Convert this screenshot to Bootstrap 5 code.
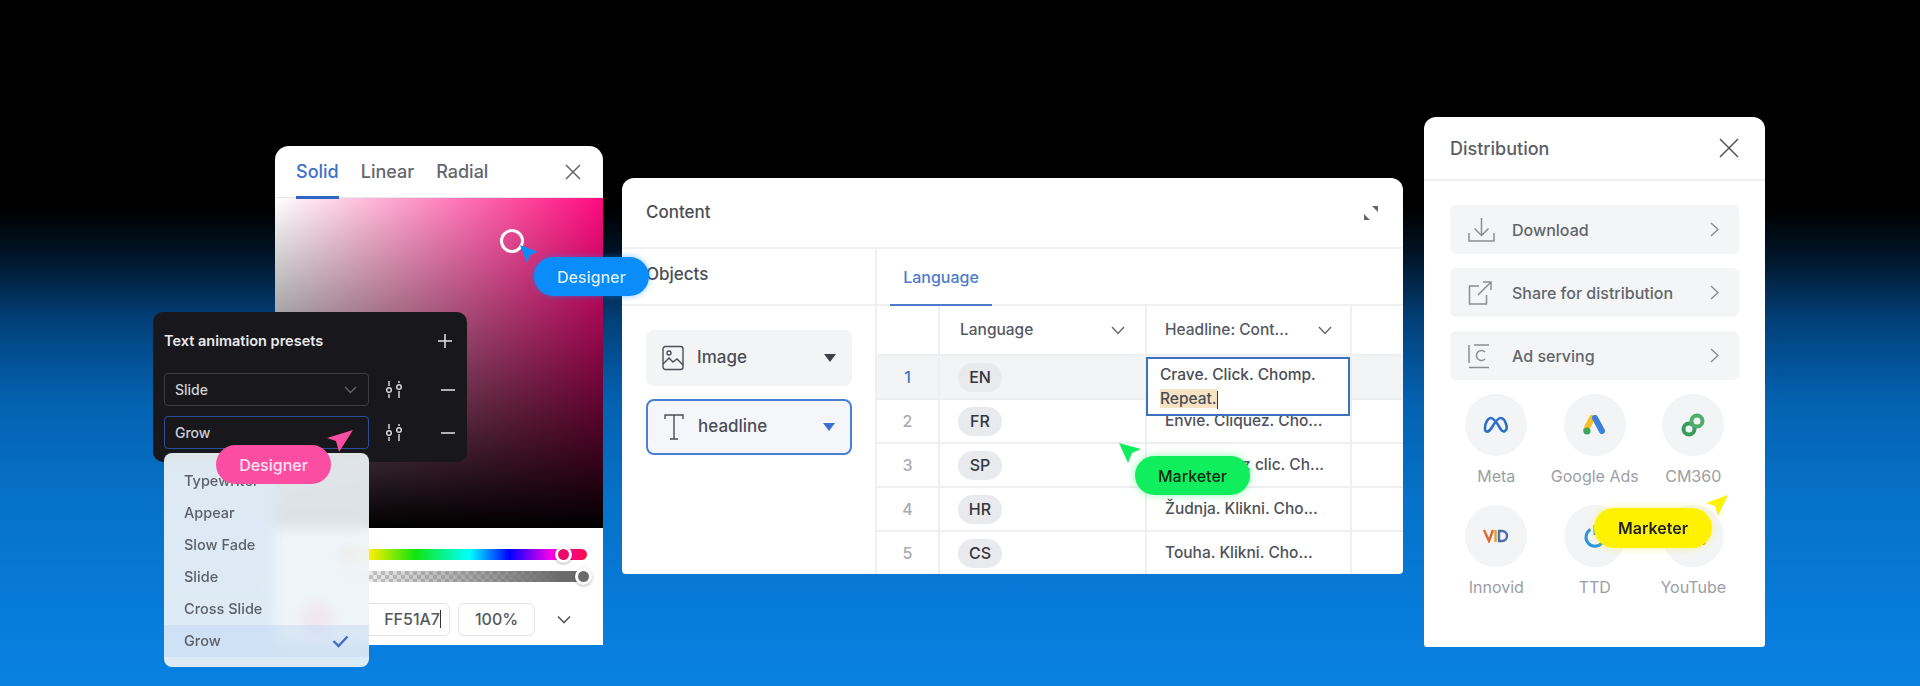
<!DOCTYPE html>
<html lang="en">
<head>
  <meta charset="UTF-8" />
  <title>Collaboration panels</title>
  <link href="https://cdn.jsdelivr.net/npm/bootstrap@5.3.3/dist/css/bootstrap.min.css" rel="stylesheet" />
  <style>
    html, body { margin: 0; height: 100%; overflow: hidden; }
    body { font-family: Inter, "Liberation Sans", sans-serif; color: #4b4e56; background: #000; }
    .stage { position: relative; width: 1920px; height: 686px; overflow: hidden;
      background: linear-gradient(180deg, #000 0, #000 210px, #01172c 260px, #024079 320px, #0461b0 400px, #0672c9 500px, #0881e3 686px); }
    .win { position: absolute; background: #fff; overflow: hidden; }
    .cursor-layer { position: absolute; left: 0; top: 0; width: 1920px; height: 686px; z-index: 9; pointer-events: none; }
    .tag { position: absolute; z-index: 10; display: flex; align-items: center; justify-content: center; border-radius: 20px; font-size: 16px; font-weight: 500; }
    .tag-blue { left: 534px; top: 257px; width: 115px; height: 39px; background: #0a8cfb; color: #dcefff; box-shadow: 0 0 6px rgba(10,140,251,.5); }
    .tag-pink { left: 216px; top: 445px; width: 115px; height: 39px; background: #fb4ea2; color: #ffe3f0; }
    .tag-green { left: 1135px; top: 456px; width: 115px; height: 39px; background: #10ee5e; color: #06240f; box-shadow: 0 0 8px rgba(16,238,94,.45); }
    .tag-yellow { left: 1594px; top: 508px; width: 118px; height: 40px; background: #fff200; color: #222; font-weight: 600; box-shadow: 0 0 8px rgba(255,242,0,.4); }

    /* colour picker */
    .picker { left: 275px; top: 146px; width: 328px; height: 499px; border-radius: 14px 14px 0 0; }
    .picker-head { height: 52px; padding: 0 21px; font-size: 18px; font-weight: 500; color: #63666d; gap: 22px; border-bottom: 1px solid #e8e8ec; }
    .picker-tab { height: 52px; display: flex; align-items: center; position: relative; }
    .picker-tab.on { color: #3e6fc8; }
    .picker-tab.on::after { content: ""; position: absolute; left: 0; right: 0; bottom: -1px; height: 3px; background: #2f66c6; }
    .sat-box { height: 330px; background: linear-gradient(180deg, rgba(0,0,0,0), #000), linear-gradient(90deg, #fff, #ff0a7e); }
    .picker-foot { height: 117px; padding: 21px 16px 0 0; }
    .hue-bar { height: 11px; margin-left: 62px; border-radius: 6px; position: relative;
      background: linear-gradient(90deg, #ff5a3a 0, #ffee00 13%, #11e50c 31%, #0ff 53%, #0000ff 69%, #ff00e6 86%, #ff0a40 100%); }
    .alpha-bar { height: 11px; margin: 11px 0 0 62px; border-radius: 6px; position: relative;
      background: linear-gradient(90deg, rgba(110,110,110,0), #6b6b6b 90%), repeating-conic-gradient(#cfcfcf 0 25%, #fff 0 50%) 0 0 / 8px 8px; }
    .thumb { position: absolute; top: -3px; width: 17px; height: 17px; border-radius: 50%; border: 3px solid #fff; box-shadow: 0 1px 3px rgba(0,0,0,.3); }
    .swatch { width: 34px; height: 34px; border-radius: 50%; background: #ff51a7; margin-left: 25px; }
    .val-box { height: 33px; border: 1px solid #e4e4e8; border-radius: 6px; font-size: 16px; font-weight: 500; color: #55585f; display: flex; align-items: center; }
    .caret-bar { display: inline-block; width: 1px; height: 18px; background: #333; }

    /* dark presets panel */
    .presets { position: absolute; z-index: 5; left: 153px; top: 312px; width: 314px; height: 150px; background: #17171c; border-radius: 10px; padding: 11px; color: #ddd; }
    .presets-head { height: 36px; padding-right: 4px; font-size: 14.5px; font-weight: 600; color: #e9e9ec; margin-bottom: 14px; }
    .preset-row { height: 33px; margin-bottom: 10px; }
    .preset-select { width: 205px; height: 33px; border: 1px solid #3c3d42; border-radius: 4px; padding: 0 11px 0 10px; font-size: 14px; font-weight: 500; color: #cfd0d3; }
    .preset-select.on { border: 1px solid #2a4d9c; }
    .preset-tools { width: 86px; padding-left: 16px; }

    /* dropdown */
    .drop { position: absolute; z-index: 6; left: 164px; top: 453px; width: 205px; height: 214px; border-radius: 8px; padding: 12px 0; background: rgba(238,243,248,.93); backdrop-filter: blur(6px); font-size: 14.5px; font-weight: 500; color: #5c6068; }
    .drop-item { height: 32px; padding: 0 20px; display: flex; align-items: center; justify-content: space-between; }
    .drop-item.on { background: rgba(190,215,245,.45); }

    /* content panel */
    .content-win { left: 622px; top: 178px; width: 781px; height: 396px; border-radius: 12px 12px 4px 4px; font-size: 15.5px; }
    .content-head { height: 71px; padding: 0 24px; border-bottom: 2px solid #eeeff1; font-size: 17px; font-weight: 500; }
    .side { width: 255px; flex: none; border-right: 2px solid #eeeff1; }
    .side-title { height: 57px; padding: 0 24px; border-bottom: 2px solid #eeeff1; font-size: 17px; font-weight: 500; }
    .obj-btn { height: 56px; margin: 0 0 13px 24px; width: 206px; border-radius: 8px; background: #f3f4f6; padding: 0 16px; font-size: 17px; font-weight: 500; gap: 13px; }
    .obj-btn.on { border: 2px solid #4a7fd4; background: #f5f6f9; padding: 0 15px; }
    .tab-strip { height: 57px; border-bottom: 2px solid #eeeff1; padding-left: 13px; }
    .tab-lang { height: 57px; width: 102px; display: flex; align-items: center; justify-content: center; color: #4d7ccb; font-size: 16px; font-weight: 500; border-bottom: 2px solid #4d7ccb; }
    .lang-table { width: 526px; table-layout: fixed; border-collapse: collapse; }
    .lang-table td, .lang-table th { padding: 0; border-bottom: 2px solid #eeeff1; border-right: 2px solid #eeeff1; height: 44px; vertical-align: middle; font-weight: 500; }
    .lang-table th { height: 49px; font-size: 15.5px; padding: 0 20px; color: #565962; }
    .lang-table td:last-child, .lang-table th:last-child { border-right: 0; }
    .lang-table td.num { text-align: center; color: #a9abb0; font-size: 16px; }
    .lang-table td.lang { padding-left: 18px; }
    .lang-table td.txt { padding-left: 18px; color: #4f5259; white-space: nowrap; overflow: visible; font-size: 15.5px; position: relative; }
    .lang-table tr.sel td { background: #f3f4f6; }
    .lang-table tr.sel td.num { color: #3f76c9; }
    .lang-pill { display: inline-flex; align-items: center; justify-content: center; width: 44px; height: 29px; border-radius: 15px; background: #e9eaed; font-size: 16px; color: #33363c; }
    .edit-box { position: absolute; left: -1px; top: 1px; width: 204px; height: 59px; background: #fff; border: 2px solid #3f70bd; padding: 4px 12px; line-height: 24px; color: #4a4d55; z-index: 2; white-space: normal; }
    .edit-box mark { padding: 0; background: #f6e3c4; color: inherit; }

    /* distribution */
    .dist { left: 1424px; top: 117px; width: 341px; height: 530px; border-radius: 12px 12px 3px 3px; }
    .dist-head { height: 64px; padding: 0 26px; border-bottom: 2px solid #eeeff1; font-size: 18px; font-weight: 500; color: #5b5e65; }
    .dist-list { padding: 24px 26px 0; }
    .dist-row { height: 49px; margin-bottom: 14px; border-radius: 6px; background: #f4f5f7; padding: 0 20px 0 18px; font-size: 16px; font-weight: 500; color: #62656c; }
    .dist-ico { width: 32px; margin-right: 12px; flex: none; display: flex; }
    .dist-grid { display: grid; grid-template-columns: repeat(3, 98.5px); padding-left: 23px; margin-top: 12px; row-gap: 17px; }
    .dist-cell { text-align: center; font-size: 16px; color: #9c9ea5; white-space: nowrap; font-weight: 400; }
    .dist-circle { width: 62px; height: 62px; border-radius: 50%; background: #f3f4f6; margin: 0 auto 8px; display: flex; align-items: center; justify-content: center; }
  </style>
</head>
<body>
  <div class="stage">

    <!-- colour picker -->
    <div class="win picker">
      <div class="picker-head d-flex align-items-center">
        <span class="picker-tab on">Solid</span>
        <span class="picker-tab">Linear</span>
        <span class="picker-tab">Radial</span>
        <svg class="ms-auto" width="18" height="18" viewBox="0 0 18 18" fill="none" stroke="#62656c" stroke-width="1.5"><path d="M2 2l14 14M16 2L2 16"/></svg>
      </div>
      <div class="sat-box"></div>
      <div class="picker-foot">
        <div class="hue-bar"><span class="thumb" style="left:218px;background:#e80a6c"></span></div>
        <div class="alpha-bar"><span class="thumb" style="left:238px;background:#6b6b6b"></span></div>
        <div class="d-flex align-items-center mt-3 pt-1">
          <span class="swatch flex-none"></span>
          <span class="val-box justify-content-end pe-2 ms-1" style="width:112px">FF51A7<span class="caret-bar"></span></span>
          <span class="val-box justify-content-center ms-2" style="width:77px">100%</span>
          <svg class="ms-auto me-3" width="14" height="9" viewBox="0 0 14 9" fill="none" stroke="#55585f" stroke-width="1.6"><path d="M1 1.5l6 6 6-6"/></svg>
        </div>
      </div>
    </div>

    <!-- content -->
    <div class="win content-win">
      <div class="content-head d-flex align-items-center justify-content-between">
        <span>Content</span>
        <svg width="16" height="16" viewBox="0 0 16 16" fill="#62656c"><path d="M9 1h6v6zM7 15H1V9z"/></svg>
      </div>
      <div class="d-flex">
        <div class="side">
          <div class="side-title d-flex align-items-center mb-4 pb-1">Objects</div>
          <div class="obj-btn d-flex align-items-center">
            <svg width="22" height="26" viewBox="0 0 22 26" fill="none" stroke="#4b4e56" stroke-width="1.4"><rect x="1" y="1.5" width="20" height="23" rx="2.5"/><circle cx="7" cy="8" r="2"/><path d="M1 19l6-6 4 4 4-3 6 6"/></svg>
            <span>Image</span>
            <svg class="ms-auto" width="12" height="8" viewBox="0 0 12 8" fill="#3e4147"><path d="M0 0h12L6 8z"/></svg>
          </div>
          <div class="obj-btn on d-flex align-items-center">
            <svg width="22" height="28" viewBox="0 0 22 28" fill="none" stroke="#4b4e56" stroke-width="1.4"><path d="M2 6V2h18v4M11 2v24M7 26h8"/></svg>
            <span>headline</span>
            <svg class="ms-auto" width="12" height="8" viewBox="0 0 12 8" fill="#3f6fd0"><path d="M0 0h12L6 8z"/></svg>
          </div>
        </div>
        <div class="flex-grow-1">
          <div class="tab-strip"><div class="tab-lang">Language</div></div>
          <table class="lang-table">
            <colgroup><col style="width:62px"><col style="width:207px"><col style="width:205px"><col></colgroup>
            <tr>
              <th></th>
              <th><div class="d-flex align-items-center justify-content-between">Language <svg width="14" height="9" viewBox="0 0 14 9" fill="none" stroke="#62656c" stroke-width="1.4"><path d="M1 1l6 6.5L13 1"/></svg></div></th>
              <th style="padding:0 18px"><div class="d-flex align-items-center justify-content-between">Headline: Cont... <svg width="14" height="9" viewBox="0 0 14 9" fill="none" stroke="#62656c" stroke-width="1.4"><path d="M1 1l6 6.5L13 1"/></svg></div></th>
              <th></th>
            </tr>
            <tr class="sel">
              <td class="num">1</td><td class="lang"><span class="lang-pill">EN</span></td>
              <td class="txt"><div class="edit-box">Crave. Click. Chomp. <mark>Repeat.</mark><span class="caret-bar align-middle"></span></div></td><td></td>
            </tr>
            <tr><td class="num">2</td><td class="lang"><span class="lang-pill">FR</span></td><td class="txt">Envie. Cliquez. Cho...</td><td></td></tr>
            <tr><td class="num">3</td><td class="lang"><span class="lang-pill">SP</span></td><td class="txt">Antojo. Haz clic. Ch...</td><td></td></tr>
            <tr><td class="num">4</td><td class="lang"><span class="lang-pill">HR</span></td><td class="txt">Žudnja. Klikni. Cho...</td><td></td></tr>
            <tr><td class="num">5</td><td class="lang"><span class="lang-pill">CS</span></td><td class="txt">Touha. Klikni. Cho...</td><td></td></tr>
          </table>
        </div>
      </div>
    </div>

    <!-- distribution -->
    <div class="win dist">
      <div class="dist-head d-flex align-items-center justify-content-between">
        <span>Distribution</span>
        <svg width="20" height="20" viewBox="0 0 20 20" fill="none" stroke="#55585f" stroke-width="1.6"><path d="M1 1l18 18M19 1L1 19"/></svg>
      </div>
      <div class="dist-list">
        <div class="dist-row d-flex align-items-center">
          <span class="dist-ico"><svg width="27" height="26" viewBox="0 0 27 26" fill="none" stroke="#8b8d93" stroke-width="1.5"><path d="M13.5 1v17M6.5 11.500l7 7 7-7M1 16v8h25v-8"/></svg></span>
          <span>Download</span>
          <svg class="ms-auto" width="9" height="15" viewBox="0 0 9 15" fill="none" stroke="#8b8d93" stroke-width="1.5"><path d="M1 1l7 6.500-7 6.500"/></svg>
        </div>
        <div class="dist-row d-flex align-items-center">
          <span class="dist-ico"><svg width="24" height="24" viewBox="0 0 24 24" fill="none" stroke="#8b8d93" stroke-width="1.5"><path d="M11 5H1.500v18h17v-9M10 14L23 1M15 1h8v8"/></svg></span>
          <span>Share for distribution</span>
          <svg class="ms-auto" width="9" height="15" viewBox="0 0 9 15" fill="none" stroke="#8b8d93" stroke-width="1.5"><path d="M1 1l7 6.500-7 6.500"/></svg>
        </div>
        <div class="dist-row d-flex align-items-center">
          <span class="dist-ico"><svg width="22" height="26" viewBox="0 0 22 26" fill="none" stroke="#8b8d93" stroke-width="1.5"><path d="M1 2v18M6 2h15M1 24.500h20M17 9a5 5 0 1 0 0 7"/></svg></span>
          <span>Ad serving</span>
          <svg class="ms-auto" width="9" height="15" viewBox="0 0 9 15" fill="none" stroke="#8b8d93" stroke-width="1.5"><path d="M1 1l7 6.500-7 6.500"/></svg>
        </div>
        <div class="dist-grid" style="margin-left:-26px">
          <div class="dist-cell">
            <div class="dist-circle"><svg width="26" height="18" viewBox="0 0 26 18" fill="none" stroke="#2a6fc4" stroke-width="2.6"><path d="M2 12c0-5 3-10 6-10s6 5 9 10c1.500 3 3 4 5 3 2-1 2-4 1-7-1-3.500-3-6-5.500-6-3 0-6 5-9 10-1.500 2.500-3 4-5 3.500C2.500 15.500 2 14 2 12z"/></svg></div>Meta
          </div>
          <div class="dist-cell">
            <div class="dist-circle"><svg width="24" height="20" viewBox="0 0 24 20"><path d="M9 3L3 15" stroke="#f4bf27" stroke-width="6" stroke-linecap="round"/><path d="M12 3l7 13" stroke="#3c80d8" stroke-width="6" stroke-linecap="round"/><circle cx="4" cy="16" r="3.500" fill="#3ba55c"/></svg></div>Google Ads
          </div>
          <div class="dist-cell">
            <div class="dist-circle"><svg width="24" height="24" viewBox="0 0 24 24" fill="none" stroke-width="4"><circle cx="8" cy="16" r="5.500" stroke="#3b9b5d"/><circle cx="16" cy="8" r="5.500" stroke="#4fae6c"/></svg></div>CM360
          </div>
          <div class="dist-cell">
            <div class="dist-circle"><svg width="26" height="14" viewBox="0 0 26 14" fill="none" stroke-width="2.4"><path d="M1 1l5 11 4-11" stroke="#e2662f"/><path d="M12.500 1v12" stroke="#d9a53a"/><path d="M16 2h3a5 5 0 0 1 0 10h-3z" stroke="#4a6fa8"/></svg></div>Innovid
          </div>
          <div class="dist-cell">
            <div class="dist-circle"><svg width="24" height="24" viewBox="0 0 24 24" fill="none" stroke="#2a93dd" stroke-width="3"><path d="M7.500 5.500a9 9 0 1 0 9 0"/><path d="M12 1v10"/></svg></div>TTD
          </div>
          <div class="dist-cell">
            <div class="dist-circle"><svg width="25" height="18" viewBox="0 0 25 18"><rect width="25" height="18" rx="4" fill="#f5120e"/><path d="M10 5l6 4-6 4z" fill="#fff"/></svg></div>YouTube
          </div>
        </div>
      </div>
    </div>

    <!-- text animation presets -->
    <div class="presets">
      <div class="presets-head d-flex align-items-center justify-content-between">
        <span>Text animation presets</span>
        <svg width="14" height="14" viewBox="0 0 14 14" stroke="#e5e5e8" stroke-width="1.5"><path d="M7 0v14M0 7h14"/></svg>
      </div>
      <div class="preset-row d-flex align-items-center">
        <div class="preset-select d-flex align-items-center justify-content-between">Slide
          <svg width="13" height="8" viewBox="0 0 13 8" fill="none" stroke="#66676c" stroke-width="1.300"><path d="M1 1l5.500 5.500L12 1"/></svg>
        </div>
        <div class="preset-tools d-flex align-items-center justify-content-between">
          <svg width="18" height="17" viewBox="0 0 18 17" fill="none" stroke="#d5d5d8" stroke-width="1.500"><path d="M4 0v5M4 13v4M14 0v2M14 10v7"/><circle cx="4" cy="9" r="2.300"/><circle cx="14" cy="6" r="2.300"/></svg>
          <svg width="14" height="2" viewBox="0 0 14 2" stroke="#e5e5e8" stroke-width="1.500"><path d="M0 1h14"/></svg>
        </div>
      </div>
      <div class="preset-row d-flex align-items-center">
        <div class="preset-select on d-flex align-items-center">Grow</div>
        <div class="preset-tools d-flex align-items-center justify-content-between">
          <svg width="18" height="17" viewBox="0 0 18 17" fill="none" stroke="#d5d5d8" stroke-width="1.500"><path d="M4 0v5M4 13v4M14 0v2M14 10v7"/><circle cx="4" cy="9" r="2.300"/><circle cx="14" cy="6" r="2.300"/></svg>
          <svg width="14" height="2" viewBox="0 0 14 2" stroke="#e5e5e8" stroke-width="1.500"><path d="M0 1h14"/></svg>
        </div>
      </div>
    </div>

    <div class="drop">
      <div class="drop-item">Typewriter</div>
      <div class="drop-item">Appear</div>
      <div class="drop-item">Slow Fade</div>
      <div class="drop-item">Slide</div>
      <div class="drop-item">Cross Slide</div>
      <div class="drop-item on">Grow
        <svg width="17" height="13" viewBox="0 0 17 13" fill="none" stroke="#3f6fc4" stroke-width="2.400"><path d="M1.500 6l5 5L15.500 1.500"/></svg>
      </div>
    </div>

    <!-- cursors -->
    <svg class="cursor-layer" viewBox="0 0 1920 686">
      <circle cx="512" cy="241" r="10.500" fill="none" stroke="#fff" stroke-width="3"/>
      <path d="M520 245l18 7-8 3-3 8z" fill="#0a8cfb"/>
      <path d="M353 430l-26 8 9 3 3 11z" fill="#fb4ea2"/>
      <path d="M1119 443l22 6-9 4-4 10z" fill="#10ee5e"/>
      <path d="M1728 495l-22 8 9 3 3 10z" fill="#fff200"/>
    </svg>
    <div class="tag tag-blue">Designer</div>
    <div class="tag tag-pink">Designer</div>
    <div class="tag tag-green">Marketer</div>
    <div class="tag tag-yellow">Marketer</div>
  </div>
  <script src="https://cdn.jsdelivr.net/npm/bootstrap@5.3.3/dist/js/bootstrap.bundle.min.js"></script>
</body>
</html>
